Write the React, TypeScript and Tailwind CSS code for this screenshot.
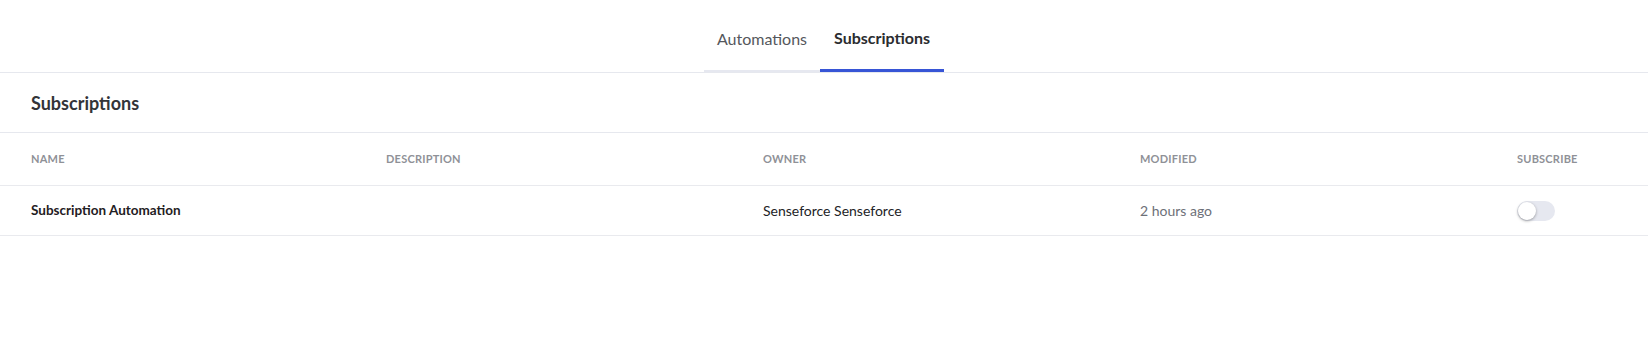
import React, { useState } from 'react';

const columns = ['Name', 'Description', 'Owner', 'Modified', 'Subscribe'];

const rows = [
  {
    name: 'Subscription Automation',
    description: '',
    owner: 'Senseforce Senseforce',
    modified: '2 hours ago',
    subscribed: false,
  },
];

function Toggle({ on, onChange }: { on: boolean; onChange: (v: boolean) => void }) {
  return (
    <button
      onClick={() => onChange(!on)}
      className={`relative block w-[38px] h-[20px] rounded-full transition-colors ${on ? 'bg-[#3755d6]' : 'bg-[#e6e8f0]'}`}
    >
      <span
        className={`absolute top-[1px] w-[18px] h-[18px] rounded-full bg-white shadow-[0_1px_3px_rgba(0,0,0,0.35)] transition-all ${on ? 'left-[19px]' : 'left-[1px]'}`}
      />
    </button>
  );
}

export default function App() {
  const [tab, setTab] = useState('subscriptions');
  const [subs, setSubs] = useState(rows.map(r => r.subscribed));

  return (
    <div className="w-full min-h-[338px] bg-white text-[#2f3033]" style={{ fontFamily: 'Lato, "Noto Sans", sans-serif' }}>
      <div className="flex justify-center h-[73px] border-b border-[#e6e8ee]">
        <div className="flex items-stretch">
          <button
            onClick={() => setTab('automations')}
            className={`px-[13px] pt-[7px] text-[16px] ${tab === 'automations' ? 'font-bold text-[#2b2c2f] border-b-[3px] border-[#3755d6]' : 'text-[#55575c] border-b-2 border-[#e6e8f0]'}`}
          >
            Automations
          </button>
          <button
            onClick={() => setTab('subscriptions')}
            className={`px-[14px] pt-[7px] text-[16px] ${tab === 'subscriptions' ? 'font-bold text-[#2b2c2f] border-b-[3px] border-[#3755d6]' : 'text-[#55575c] border-b-2 border-[#e6e8f0]'}`}
          >
            Subscriptions
          </button>
        </div>
      </div>

      <div className="h-[60px] flex items-center px-[31px] pt-[2px] border-b border-[#e6e8ee]">
        <h2 className="text-[18px] font-bold text-[#333438]">Subscriptions</h2>
      </div>

      <div className="grid grid-cols-[355px_377px_377px_377px_1fr] items-center h-[53px] px-[31px] border-b border-[#e9eaee]">
        {columns.map(c => (
          <div key={c} className="text-[11px] font-bold uppercase tracking-[0.02em] text-[#8f9197]">
            {c}
          </div>
        ))}
      </div>

      {rows.map((r, i) => (
        <div key={r.name} className="grid grid-cols-[355px_377px_377px_377px_1fr] items-center h-[50px] px-[31px] border-b border-[#e9eaee] text-[14px]">
          <div className="font-bold text-[#1f2023] text-[13.5px]">{r.name}</div>
          <div className="text-[#555]">{r.description}</div>
          <div className="text-[#222326]">{r.owner}</div>
          <div className="text-[#6d7078]">{r.modified}</div>
          <div className="flex items-center pt-[1px]">
            <Toggle
              on={subs[i]}
              onChange={v => setSubs(s => s.map((x, j) => (j === i ? v : x)))}
            />
          </div>
        </div>
      ))}
    </div>
  );
}
